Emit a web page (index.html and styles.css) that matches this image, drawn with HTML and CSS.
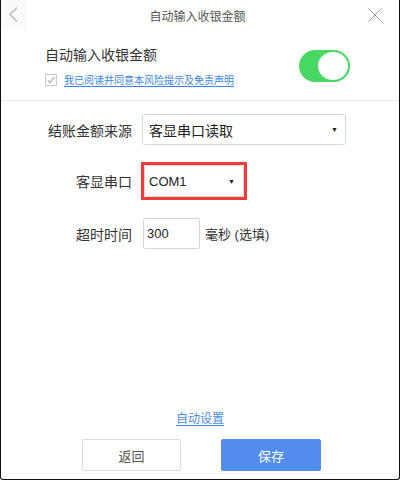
FILE: index.html
```html
<!DOCTYPE html>
<html lang="zh">
<head>
<meta charset="utf-8">
<title>自动输入收银金额</title>
<link rel="stylesheet" href="styles.css">
</head>
<body>
<div class="window">
  <div class="titlebar">
    <div class="back">
      <svg width="9" height="15" viewBox="0 0 9 15"><path d="M8 0.5 L1 7.5 L8 14.5" fill="none" stroke="#b8b8b8" stroke-width="1.4"/></svg>
    </div>
    <div class="title">自动输入收银金额</div>
    <div class="close">
      <svg width="14" height="14" viewBox="0 0 14 14"><path d="M0.5 0.5 L13.5 13.5 M13.5 0.5 L0.5 13.5" fill="none" stroke="#9a9a9a" stroke-width="1"/></svg>
    </div>
  </div>

  <div class="top">
    <div class="top-text">
      <div class="heading">自动输入收银金额</div>
      <div class="agree">
        <span class="checkbox">
          <svg width="12" height="12" viewBox="0 0 12 12"><rect x="0.5" y="0.5" width="11" height="11" fill="#fff" stroke="#c8c8c8"/><path d="M2.8 6.2 L5 8.6 L9.4 3" fill="none" stroke="#b4b4b4" stroke-width="1.3"/></svg>
        </span>
        <a class="agree-link" href="#">我已阅读并同意本风险提示及免责声明</a>
      </div>
    </div>
    <div class="toggle"><span class="knob"></span></div>
  </div>

  <div class="form">
    <div class="row">
      <div class="label">结账金额来源</div>
      <div class="select wide"><span>客显串口读取</span><span class="caret">▼</span></div>
    </div>
    <div class="row">
      <div class="label">客显串口</div>
      <div class="highlight">
        <div class="select narrow"><span>COM1</span><span class="caret">▼</span></div>
      </div>
    </div>
    <div class="row">
      <div class="label">超时时间</div>
      <div class="input">300</div>
      <div class="unit">毫秒 (选填)</div>
    </div>
  </div>

  <div class="footer">
    <a class="auto-link" href="#">自动设置</a>
    <div class="buttons">
      <button class="btn btn-back">返回</button>
      <button class="btn btn-save">保存</button>
    </div>
  </div>
</div>
</body>
</html>
```

FILE: styles.css
```css
* { box-sizing: border-box; }
html, body { margin: 0; padding: 0; background: #fff; }
body {
  font-family: "Liberation Sans", "Noto Sans CJK SC", sans-serif;
  color: #333;
}
.window {
  width: 400px;
  height: 480px;
  border: 1px solid #111;
  border-top: none;
  border-radius: 0 0 3px 3px;
  display: flex;
  flex-direction: column;
  background: #fff;
}
.titlebar {
  height: 30px;
  display: flex;
  align-items: center;
}
.back {
  width: 25px;
  height: 28px;
  align-self: flex-start;
  background: #fafafa;
  display: flex;
  align-items: center;
  justify-content: flex-end;
  padding-right: 8px;
  padding-top: 1px;
}
.title {
  flex: 1;
  text-align: center;
  font-size: 12px;
  color: #555;
  padding-left: 4px;
}
.close {
  width: 34px;
  display: flex;
  align-items: center;
  padding-left: 3px;
  margin-top: -1px;
}
.close svg { display: block; }
.back svg { display: block; }

.top {
  height: 71px;
  border-bottom: 1px solid #ececec;
  display: flex;
  align-items: center;
  padding: 0 49px 0 44px;
}
.top-text { flex: 1; padding-top: 2px; }
.heading {
  font-size: 14px;
  line-height: 20px;
  color: #333;
}
.agree {
  margin-top: 7px;
  display: flex;
  align-items: center;
  height: 16px;
}
.checkbox { width: 12px; height: 12px; display: block; margin-right: 7px; }
.checkbox svg { display: block; }
.agree-link {
  font-size: 10px;
  color: #3a86e3;
  text-decoration: underline;
  text-underline-offset: 2px;
}
.toggle {
  width: 51px;
  height: 32px;
  border-radius: 16px;
  background: #48d762;
  position: relative;
  margin-top: 1px;
}
.knob {
  position: absolute;
  right: 2px;
  top: 2px;
  width: 30px;
  height: 28px;
  border-radius: 50%;
  background: #fff;
}

.form {
  flex: 1;
  padding-top: 13px;
  display: flex;
  flex-direction: column;
  gap: 17px;
}
.row {
  display: flex;
  align-items: center;
}
.row + .row + .row { margin-top: 1px; }
.label {
  width: 131px;
  text-align: right;
  font-size: 14px;
  color: #333;
  margin-right: 10px;
}
.select {
  height: 31px;
  border: 1px solid #d6d6d6;
  border-radius: 3px;
  display: flex;
  align-items: center;
  justify-content: space-between;
  padding: 0 7px 0 6px;
  font-size: 14px;
  color: #222;
  background: #fff;
}
.select.wide { width: 204px; }
.select.narrow {
  width: 100px;
  height: 32px;
  font-size: 13px;
  padding-left: 4px;
  padding-right: 8px;
}
.caret { font-size: 7px; color: #222; }
.highlight {
  border: 3px solid #f23a3a;
  margin-left: -1px;
}
.input {
  width: 57px;
  height: 31px;
  border: 1px solid #d6d6d6;
  border-radius: 2px;
  font-size: 13px;
  color: #222;
  display: flex;
  align-items: center;
  padding-left: 3px;
  margin-left: 1px;
}
.unit {
  font-size: 13px;
  color: #333;
  margin-left: 5px;
}

.footer {
  display: flex;
  flex-direction: column;
  align-items: center;
  padding-bottom: 8px;
}
.auto-link {
  font-size: 12px;
  line-height: 16px;
  color: #4a8be6;
  text-decoration: underline;
  text-underline-offset: 2px;
  margin-bottom: 12px;
}
.buttons {
  display: flex;
  gap: 40px;
  padding-left: 3px;
}
.btn {
  height: 32px;
  font-family: "Liberation Sans", "Noto Sans CJK SC", sans-serif;
  font-size: 13px;
  border-radius: 2px;
  cursor: pointer;
}
.btn-back {
  width: 99px;
  background: #fff;
  border: 1px solid #dcdcdc;
  color: #555;
}
.btn-save {
  width: 100px;
  background: #538ded;
  border: 1px solid #538ded;
  color: #fff;
}
```
